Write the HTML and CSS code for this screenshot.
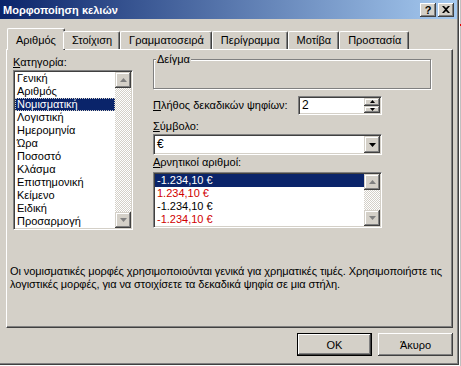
FILE: index.html
```html
<!DOCTYPE html>
<html lang="el">
<head>
<meta charset="utf-8">
<title>Μορφοποίηση κελιών</title>
<link rel="stylesheet" href="styles.css">
</head>
<body>
<div class="screen">
  <div class="dialog">
    <div class="titlebar">
      <span class="title">Μορφοποίηση κελιών</span>
      <div class="capbtns">
        <span class="capbtn help">?</span>
        <span class="capbtn close"><svg width="8" height="7" viewBox="0 0 8 7"><path d="M0 0h2l2 2 2-2h2L5 3.5 8 7H6L4 5 2 7H0l3-3.5z" fill="#000"/></svg></span>
      </div>
    </div>
    <div class="tabs">
      <div class="tab active">Αριθμός</div>
      <div class="tab">Στοίχιση</div>
      <div class="tab">Γραμματοσειρά</div>
      <div class="tab">Περίγραμμα</div>
      <div class="tab">Μοτίβα</div>
      <div class="tab">Προστασία</div>
    </div>
    <div class="panel">
      <div class="cols">
        <div class="left">
          <div class="lbl"><u>Κ</u>ατηγορία:</div>
          <div class="listbox cat">
            <div class="items">
              <div class="item">Γενική</div>
              <div class="item">Αριθμός</div>
              <div class="item sel focus">Νομισματική</div>
              <div class="item">Λογιστική</div>
              <div class="item">Ημερομηνία</div>
              <div class="item">Ώρα</div>
              <div class="item">Ποσοστό</div>
              <div class="item">Κλάσμα</div>
              <div class="item">Επιστημονική</div>
              <div class="item">Κείμενο</div>
              <div class="item">Ειδική</div>
              <div class="item">Προσαρμογή</div>
            </div>
            <div class="vscroll">
              <div class="sbtn"><svg width="7" height="4" viewBox="0 0 7 4"><path d="M3.5 0L7 4H0z" fill="#808080"/></svg></div>
              <div class="track"></div>
              <div class="sbtn"><svg width="7" height="4" viewBox="0 0 7 4"><path d="M0 0h7L3.5 4z" fill="#808080"/></svg></div>
            </div>
          </div>
        </div>
        <div class="right">
          <fieldset class="sample"><legend>Δείγμα</legend></fieldset>
          <div class="decimals">
            <span class="lbl dlbl"><u>Π</u>λήθος δεκαδικών ψηφίων:</span>
            <div class="field spin">
              <span class="val">2</span>
              <div class="spinbtns">
                <div class="spbtn"><svg width="5" height="3" viewBox="0 0 5 3"><path d="M2.5 0L5 3H0z" fill="#000"/></svg></div>
                <div class="spbtn"><svg width="5" height="3" viewBox="0 0 5 3"><path d="M0 0h5L2.5 3z" fill="#000"/></svg></div>
              </div>
            </div>
          </div>
          <div class="lbl sym"><u>Σ</u>ύμβολο:</div>
          <div class="field combo">
            <span class="val">€</span>
            <div class="dropbtn"><svg width="7" height="4" viewBox="0 0 7 4"><path d="M0 0h7L3.5 4z" fill="#000"/></svg></div>
          </div>
          <div class="lbl neglbl"><u>Α</u>ρνητικοί αριθμοί:</div>
          <div class="listbox neg">
            <div class="items">
              <div class="item sel">-1.234,10 €</div>
              <div class="item red">1.234,10 €</div>
              <div class="item">-1.234,10 €</div>
              <div class="item red">-1.234,10 €</div>
            </div>
            <div class="vscroll">
              <div class="sbtn"><svg width="7" height="4" viewBox="0 0 7 4"><path d="M3.5 0L7 4H0z" fill="#808080"/></svg></div>
              <div class="track"></div>
              <div class="sbtn"><svg width="7" height="4" viewBox="0 0 7 4"><path d="M0 0h7L3.5 4z" fill="#808080"/></svg></div>
            </div>
          </div>
        </div>
      </div>
      <p class="desc">Οι νομισματικές μορφές χρησιμοποιούνται γενικά για χρηματικές τιμές. Χρησιμοποιήστε τις λογιστικές μορφές, για να στοιχίσετε τα δεκαδικά ψηφία σε μια στήλη.</p>
    </div>
    <div class="buttons">
      <button class="btn default">OK</button>
      <button class="btn">Άκυρο</button>
    </div>
  </div>
  <div class="sheet-edge"><span class="redmark"></span></div>
</div>
</body>
</html>
```
FILE: styles.css
```css
* { box-sizing: border-box; }
html, body { margin: 0; padding: 0; }
body {
  width: 461px;
  height: 366px;
  overflow: hidden;
  background: #ffffff;
  font-family: "Liberation Sans", "DejaVu Sans", sans-serif;
  font-size: 11px;
  color: #000;
}
.screen { display: flex; height: 366px; }
.dialog {
  width: 459px;
  height: 365px;
  flex: none;
  background: #d4d0c8;
  border-right: 1px solid #404040;
  border-bottom: 1px solid #404040;
  box-shadow: inset -1px -1px #808080;
  display: flex;
  flex-direction: column;
}
.titlebar {
  height: 19px;
  flex: none;
  margin-right: 1px;
  background: linear-gradient(to right, #0a246a, #a6caf0);
  display: flex;
  align-items: center;
  justify-content: space-between;
  padding: 0 3px 0 3px;
}
.title { color: #fff; font-weight: bold; font-size: 11px; }
.capbtns { display: flex; gap: 2px; }
.capbtn {
  width: 16px;
  height: 14px;
  background: #d4d0c8;
  box-shadow: inset -1px -1px #404040, inset 1px 1px #fff, inset -2px -2px #808080;
  display: flex;
  align-items: center;
  justify-content: center;
  font-weight: bold;
  font-size: 11px;
  line-height: 14px;
}
.tabs {
  display: flex;
  align-items: flex-end;
  height: 30px;
  flex: none;
  padding-left: 9px;
  position: relative;
  z-index: 1;
}
.tab {
  height: 18px;
  padding: 0 7px 0 8px;
  line-height: 16px;
  border-left: 1px solid #fff;
  border-top: 1px solid #fff;
  border-right: 1px solid #404040;
  box-shadow: inset -1px 0 #808080;
  border-radius: 2px 2px 0 0;
  background: #d4d0c8;
  white-space: nowrap;
}
.tab.active {
  height: 22px;
  margin: 0 -2px -1px -2px;
  padding: 3px 8px 2px 8px;
}
.panel {
  margin-left: 6px;
  width: 447px;
  height: 279px;
  flex: none;
  border-top: 1px solid #fff;
  border-left: 1px solid #fff;
  border-right: 1px solid #404040;
  border-bottom: 1px solid #404040;
  box-shadow: inset -1px -1px #808080;
  padding: 6px 0 0 6px;
}
.cols { display: flex; }
.left { width: 120px; flex: none; }
.right { width: 229px; margin-left: 20px; flex: none; }
.lbl { line-height: 13px; white-space: nowrap; }
.left .lbl { margin-bottom: 1px; }
.listbox {
  display: flex;
  background: #fff;
  border: 1px solid;
  border-color: #808080 #fff #fff #808080;
  box-shadow: inset 1px 1px #404040, inset -1px -1px #d4d0c8;
  padding: 1px;
}
.listbox.cat { height: 160px; }
.listbox.neg { height: 56px; margin-top: 3px; }
.items { flex: 1; min-width: 0; }
.item { height: 13px; line-height: 13px; padding-left: 2px; white-space: nowrap; }
.item.sel { background: #0a246a; color: #fff; }
.item.focus { outline: 1px dotted #d4d0c8; outline-offset: -1px; }
.item.red { color: #d00000; }
.vscroll { width: 16px; flex: none; display: flex; flex-direction: column; }
.track {
  flex: 1;
  background: repeating-conic-gradient(#fff 0 25%, #d4d0c8 0 50%) 0 0 / 2px 2px;
}
.sbtn, .spbtn, .dropbtn {
  background: #d4d0c8;
  box-shadow: inset -1px -1px #404040, inset 1px 1px #d4d0c8, inset -2px -2px #808080, inset 2px 2px #fff;
  display: flex;
  align-items: center;
  justify-content: center;
}
.sbtn { height: 16px; flex: none; }
.sample {
  margin: -3px 0 0 0;
  padding: 0;
  width: 278px;
  height: 36px;
  border: 1px solid #808080;
  box-shadow: inset 1px 1px #fff, 1px 1px #fff;
}
.sample legend {
  margin-left: 2px;
  padding: 0 1px;
  line-height: 13px;
  background: #d4d0c8;
}
.decimals { display: flex; align-items: center; margin-top: 7px; }
.dlbl { width: 145px; flex: none; }
.field {
  display: flex;
  background: #fff;
  border: 1px solid;
  border-color: #808080 #fff #fff #808080;
  box-shadow: inset 1px 1px #404040, inset -1px -1px #d4d0c8;
  padding: 1px;
}
.field .val { flex: 1; line-height: 15px; padding-left: 2px; font-size: 12px; }
.spin { width: 84px; height: 19px; }
.spinbtns { width: 16px; display: flex; flex-direction: column; }
.spbtn { flex: 1; }
.sym { margin-top: 5px; }
.combo { margin-top: 1px; height: 21px; }
.combo .val { line-height: 17px; }
.dropbtn { width: 16px; }
.neglbl { margin-top: 1px; }
.desc {
  margin: 35px 0 0 -3px;
  line-height: 13px;
  width: 440px;
  letter-spacing: -0.08px;
}
.buttons {
  display: flex;
  justify-content: flex-end;
  gap: 6px;
  margin-top: 5px;
  padding-right: 5px;
}
.btn {
  width: 75px;
  height: 23px;
  font: inherit;
  color: #000;
  background: #d4d0c8;
  border: none;
  padding: 0;
  box-shadow: inset -1px -1px #404040, inset 1px 1px #fff, inset -2px -2px #808080;
}
.btn.default {
  border: 1px solid #000;
  box-shadow: inset -1px -1px #404040, inset 1px 1px #fff, inset -2px -2px #808080;
}
.sheet-edge {
  flex: 1;
  border-left: 1px solid #fff;
  background: #fff;
  box-shadow: inset 1px 0 #c0c0c0;
}
.redmark {
  display: block;
  margin-top: 24px;
  height: 2px;
  background: #e00000;
}
```
